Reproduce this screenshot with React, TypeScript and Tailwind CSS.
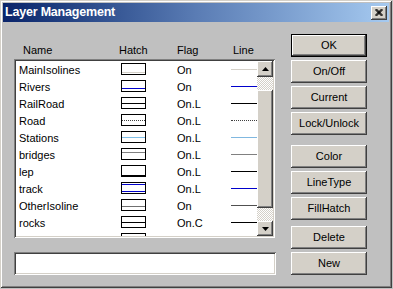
import React from "react";

type Row = {
  name: string;
  flag: string;
  hatch: { y: number; color: string; dash?: boolean; w?: number }[];
  line: { color: string; dotted?: boolean };
};

const rows: Row[] = [
  { name: "MainIsolines", flag: "On", hatch: [{ y: 9.5, color: "#d4d0c8" }], line: { color: "#d4d0c8" } },
  { name: "Rivers", flag: "On", hatch: [{ y: 8.5, color: "#0000cc" }], line: { color: "#0000cc" } },
  { name: "RailRoad", flag: "On.L", hatch: [{ y: 6.5, color: "#000000" }], line: { color: "#000000" } },
  { name: "Road", flag: "On.L", hatch: [{ y: 6.5, color: "#404040", dash: true }], line: { color: "#404040", dotted: true } },
  { name: "Stations", flag: "On.L", hatch: [{ y: 6.5, color: "#80c0e8" }], line: { color: "#80b8e0" } },
  { name: "bridges", flag: "On.L", hatch: [{ y: 4.5, color: "#808080" }], line: { color: "#808080" } },
  { name: "lep", flag: "On.L", hatch: [{ y: 10.5, color: "#000000" }], line: { color: "#000000" } },
  { name: "track", flag: "On.L", hatch: [{ y: 2.5, color: "#0000cc" }, { y: 9.5, color: "#0000cc" }], line: { color: "#0000cc" } },
  { name: "OtherIsoline", flag: "On", hatch: [{ y: 7.5, color: "#707070" }], line: { color: "#505050" } },
  { name: "rocks", flag: "On.C", hatch: [{ y: 6.5, color: "#000000" }], line: { color: "#000000" } },
  { name: "lakes", flag: "On.L", hatch: [{ y: 6.5, color: "#000000" }], line: { color: "#000000" } },
];

const raised =
  "bg-[#d4d0c8] shadow-[inset_-1px_-1px_0_#404040,inset_1px_1px_0_#ffffff,inset_-2px_-2px_0_#808080,inset_2px_2px_0_#d4d0c8]";
const sunken =
  "shadow-[inset_1px_1px_0_#808080,inset_-1px_-1px_0_#ffffff,inset_2px_2px_0_#404040,inset_-2px_-2px_0_#d4d0c8]";

function Hatch({ lines }: { lines: Row["hatch"] }) {
  return (
    <svg width="25" height="12" viewBox="0 0 25 12" className="block">
      <rect x="0.5" y="0.5" width="24" height="11" fill="#ffffff" stroke="#000000" strokeWidth="1" />
      {lines.map((l, i) => (
        <line
          key={i}
          x1="1"
          x2="24"
          y1={l.y}
          y2={l.y}
          stroke={l.color}
          strokeWidth="1"
          strokeDasharray={l.dash ? "1 1" : undefined}
        />
      ))}
    </svg>
  );
}

function Btn({ label, def, extra }: { label: string; def?: boolean; extra?: string }) {
  if (def) {
    return (
      <div className={`h-[23px] w-[76px] border border-black ${extra ?? ""}`}>
        <div className={`h-full w-full ${raised} flex items-center justify-center text-[11px] text-black`}>{label}</div>
      </div>
    );
  }
  return (
    <div className={`h-[23px] w-[76px] ${raised} flex items-center justify-center text-[11px] text-black ${extra ?? ""}`}>
      {label}
    </div>
  );
}

function Arrow({ up }: { up: boolean }) {
  return (
    <svg width="7" height="4" viewBox="0 0 7 4" className="block">
      {up ? <polygon points="3.5,0 7,4 0,4" fill="#000" /> : <polygon points="0,0 7,0 3.5,4" fill="#000" />}
    </svg>
  );
}

export default function App() {
  return (
    <div className="w-[393px] h-[289px] bg-[#c0c0c0] font-['Liberation_Sans',Arial,sans-serif] overflow-hidden">
      <div className="w-[392px] h-[288px] bg-[#c0c0c0] p-[3px] flex flex-col shadow-[inset_1px_1px_0_#d4d0c8,inset_-1px_-1px_0_#404040,inset_2px_2px_0_#ffffff,inset_-2px_-2px_0_#808080]">
        {/* Title bar */}
        <div className="h-[19px] shrink-0 bg-linear-to-r from-[#0a246a] via-[#5a7cb4] to-[#a6caf0] flex items-center pl-[2px] pr-[2px]">
          <span className="text-white font-bold text-[12.5px] tracking-[-0.2px] leading-none flex-1">Layer Management</span>
          <div className={`w-[16px] h-[14px] ${raised} flex items-center justify-center`}>
            <svg width="8" height="7" viewBox="0 0 8 7" className="block">
              <path d="M0.5 0 L7.5 7 M1.5 0 L7.5 6 M0.5 1 L6.5 7 M7.5 0 L0.5 7 M6.5 0 L0.5 6 M7.5 1 L1.5 7" stroke="#000" strokeWidth="1" />
            </svg>
          </div>
        </div>

        {/* Body */}
        <div className="flex flex-1">
          {/* Left column */}
          <div className="ml-[11px] w-[262px] pt-[20px] flex flex-col">
            <div className="h-[16px] flex items-center pl-[9px] text-[11px] text-black mb-[1px]">
              <span className="w-[96px]">Name</span>
              <span className="w-[58px]">Hatch</span>
              <span className="w-[56px]">Flag</span>
              <span>Line</span>
            </div>

            {/* List box */}
            <div className={`h-[179px] w-[261px] bg-white p-[2px] flex ${sunken}`}>
              <div className="w-[241px] h-[175px] overflow-hidden pt-[1px]">
                {rows.map((r) => (
                  <div key={r.name} className="h-[17px] flex text-[11px] text-black">
                    <div className="w-[105px] pl-[3px] leading-[17px] whitespace-nowrap">{r.name}</div>
                    <div className="w-[56px] pt-[1px]">
                      <Hatch lines={r.hatch} />
                    </div>
                    <div className="w-[54px] leading-[17px]">{r.flag}</div>
                    <div className="w-[26px] pt-[7px]">
                      {r.line.dotted ? (
                        <div className="w-full border-t border-dotted border-[#404040]" />
                      ) : (
                        <div className="w-full h-px" style={{ backgroundColor: r.line.color }} />
                      )}
                    </div>
                  </div>
                ))}
              </div>
              {/* Scrollbar */}
              <div className="w-[16px] h-[175px] flex flex-col">
                <div className={`h-[16px] w-[16px] ${raised} flex items-center justify-center`}>
                  <Arrow up />
                </div>
                <div className="h-[13px] bg-[repeating-conic-gradient(#d4d0c8_0%_25%,#ffffff_0%_50%)] bg-[length:2px_2px]" />
                <div className={`h-[118px] w-[16px] ${raised}`} />
                <div className="h-[13px] bg-[repeating-conic-gradient(#d4d0c8_0%_25%,#ffffff_0%_50%)] bg-[length:2px_2px]" />
                <div className={`h-[15px] w-[16px] ${raised} flex items-center justify-center`}>
                  <Arrow up={false} />
                </div>
              </div>
            </div>

            {/* Text input */}
            <div className={`mt-[14px] h-[23px] w-[262px] bg-white ${sunken}`} />
          </div>

          {/* Right column */}
          <div className="ml-[15px] pt-[12px] flex flex-col gap-[3px]">
            <Btn label="OK" def />
            <Btn label="On/Off" />
            <Btn label="Current" />
            <Btn label="Lock/Unlock" />
            <Btn label="Color" extra="mt-[7px]" />
            <Btn label="LineType" />
            <Btn label="FillHatch" />
            <Btn label="Delete" extra="mt-[3px]" />
            <Btn label="New" />
          </div>
        </div>
      </div>
    </div>
  );
}
